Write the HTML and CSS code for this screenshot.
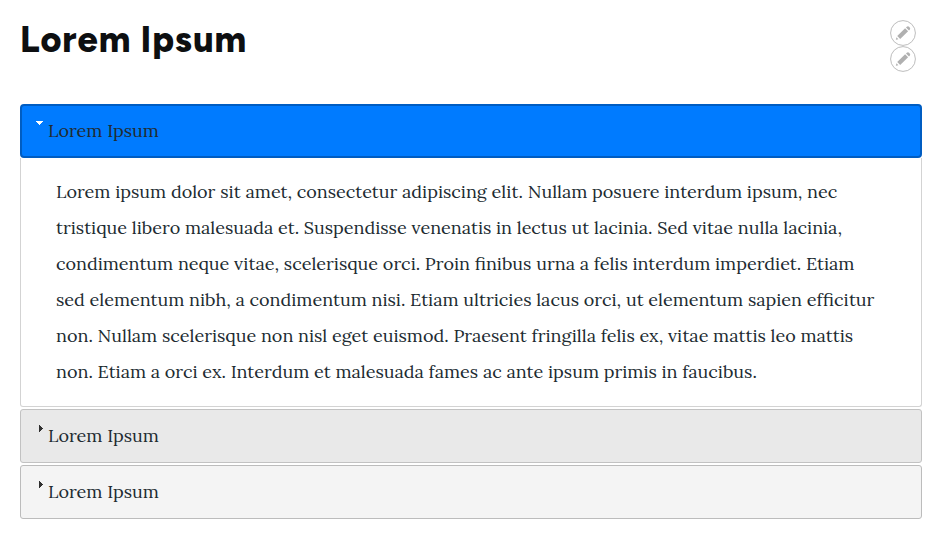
FILE: index.html
```html
<!DOCTYPE html>
<html lang="en">
<head>
<meta charset="utf-8">
<title>Lorem Ipsum</title>
<link rel="stylesheet" href="styles.css">
</head>
<body>
<header class="header">
  <h1 class="title">Lorem Ipsum</h1>
  <div class="actions">
    <button class="edit" aria-label="Edit title"><svg viewBox="0 0 26 26"><circle cx="13" cy="13" r="12.4"/><path d="M5.8 19.8l.7-2.5 1.9 1.9zM7.2 16l7.9-7.7 3 3-7.9 7.7zM16 7.5l.8-.8q1.2-1 2.3.1l.6.6q1.1 1.1 0 2.3l-.7.8z"/></svg></button>
    <button class="edit" aria-label="Edit content"><svg viewBox="0 0 26 26"><circle cx="13" cy="13" r="12.4"/><path d="M5.8 19.8l.7-2.5 1.9 1.9zM7.2 16l7.9-7.7 3 3-7.9 7.7zM16 7.5l.8-.8q1.2-1 2.3.1l.6.6q1.1 1.1 0 2.3l-.7.8z"/></svg></button>
  </div>
</header>
<main class="accordion">
  <div class="bar bar-active"><svg class="arrow" viewBox="0 0 16 16"><path d="M4 6h7v1h-1v1h-1v1H8v1H7V9H6V8H5V7H4z"/></svg><span class="label">Lorem Ipsum</span></div>
  <p class="panel">Lorem ipsum dolor sit amet, consectetur adipiscing elit. Nullam posuere interdum ipsum, nec tristique libero malesuada et. Suspendisse venenatis in lectus ut lacinia. Sed vitae nulla lacinia, condimentum neque vitae, scelerisque orci. Proin finibus urna a felis interdum imperdiet. Etiam sed elementum nibh, a condimentum nisi. Etiam ultricies lacus orci, ut elementum sapien efficitur non. Nullam scelerisque non nisl eget euismod. Praesent fringilla felis ex, vitae mattis leo mattis non. Etiam a orci ex. Interdum et malesuada fames ac ante ipsum primis in faucibus.</p>
  <div class="bar bar-hover"><svg class="arrow" viewBox="0 0 16 16"><path d="M7 4h1v1h1v1h1v1h1v1h-1v1H9v1H8v1H7z"/></svg><span class="label">Lorem Ipsum</span></div>
  <div class="bar"><svg class="arrow" viewBox="0 0 16 16"><path d="M7 4h1v1h1v1h1v1h1v1h-1v1H9v1H8v1H7z"/></svg><span class="label">Lorem Ipsum</span></div>
</main>
</body>
</html>
```
FILE: styles.css
```css
* { box-sizing: border-box; }
body {
  margin: 0;
  padding: 20px 25px 0 20px;
  background: #fff;
  color: #212b31;
  font-family: Lora, "Liberation Serif", serif;
  font-size: 18px;
}
.header { display: flex; justify-content: space-between; height: 84px; padding-right: 6px; }
.title {
  margin: 0;
  color: #0d0f11;
  font: 800 36px/40px Figtree, Montserrat, Inter, sans-serif;
  letter-spacing: .9px;
  white-space: nowrap;
}
.actions { display: flex; flex-direction: column; }
.edit { display: block; width: 26px; height: 26px; padding: 0; border: 0; background: none; }
.edit svg { display: block; width: 26px; height: 26px; fill: #b0b0b0; }
.edit circle { fill: #fff; stroke: #bdbdbd; stroke-width: 1; }
.bar {
  display: flex;
  height: 54px;
  margin-bottom: 2px;
  padding: 8px 0 0 11px;
  border: 1px solid #bcbcbc;
  border-radius: 3px;
  background: #f4f4f4;
}
.bar-hover { background: #e9e9e9; border-color: #c2c2c2; }
.bar-active {
  margin: 0;
  padding: 7px 0 0 10px;
  border: 2px solid #005dc2;
  border-radius: 4px;
  background: #007bff;
}
.arrow { width: 16px; height: 16px; margin-top: 3px; fill: #303030; shape-rendering: crispEdges; }
.bar-active .arrow { margin-top: 2px; fill: #fff; }
.label { line-height: 36px; white-space: nowrap; }
.panel {
  height: 249px;
  margin: 0 0 2px;
  padding: 16px 35px;
  border: 1px solid #d3d3d3;
  border-top: 0;
  border-radius: 0 0 3px 3px;
  line-height: 36px;
}
```
